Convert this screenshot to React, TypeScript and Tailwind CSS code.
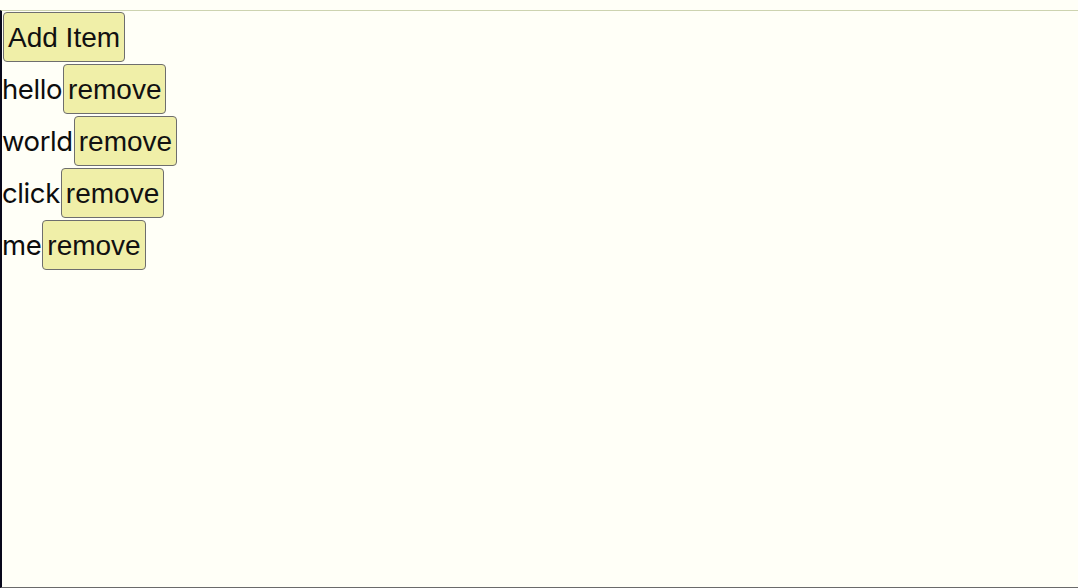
import React, { useState } from 'react';

const INITIAL_ITEMS = ['hello', 'world', 'click', 'me'];

const buttonClass =
  "m-px px-[4px] pt-[9px] pb-[7px] border border-[#6e6e6e] rounded-[4px] bg-[#f0efa8] text-[#111] leading-[32px] font-['Liberation_Sans',Arial,sans-serif] cursor-pointer";

export default function App() {
  const [items, setItems] = useState<string[]>(INITIAL_ITEMS);

  const addItem = () => {
    const word = window.prompt('Enter some text') || '';
    if (word) setItems([...items, word]);
  };

  const removeItem = (idx: number) => {
    setItems(items.filter((_, i) => i !== idx));
  };

  return (
    <div className="w-[1078px] h-[588px] bg-[#fffff7] pt-[10px] font-['Inter','Liberation_Sans',sans-serif] text-[28px] text-[#0d0d0d]">
      <div className="h-[578px] border-t border-t-[#cdd3b0] border-l-2 border-l-[#08081a] border-b border-b-[#6a6a6a]">
        <button className={buttonClass} onClick={addItem}>
          Add Item
        </button>
        {items.map((item, idx) => (
          <div key={idx} className="flex items-baseline leading-[32px]">
            <span className="text-[27.5px] tracking-[-0.4px]">{item}</span>
            <button className={buttonClass} onClick={() => removeItem(idx)}>
              remove
            </button>
          </div>
        ))}
      </div>
    </div>
  );
}
